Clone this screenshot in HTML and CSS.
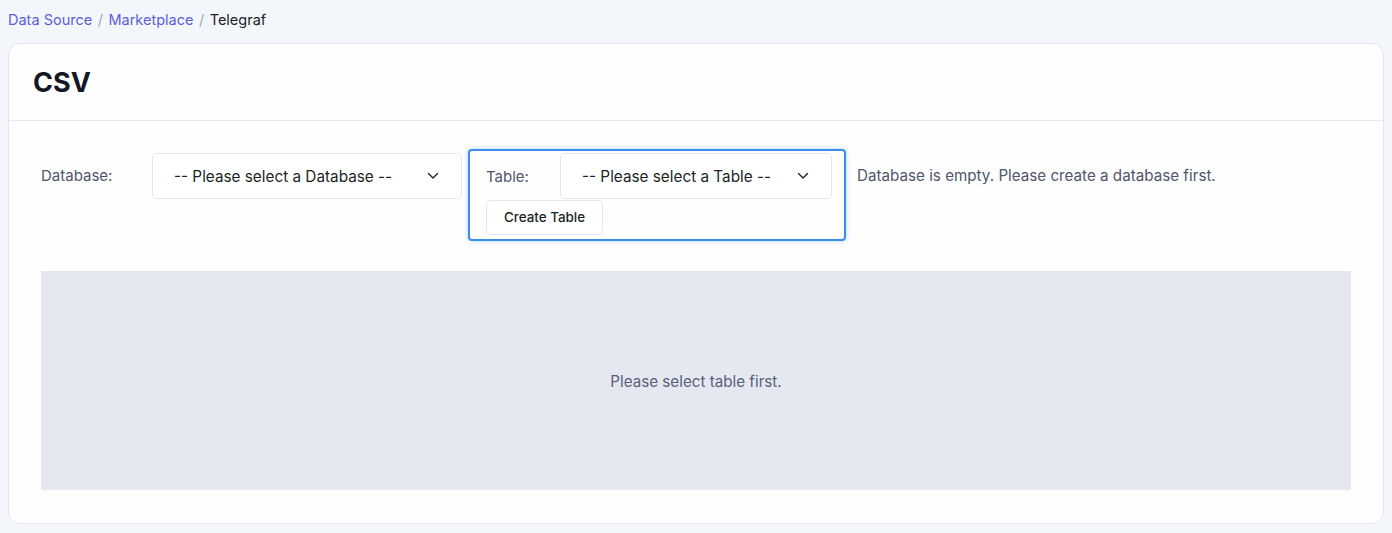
FILE: index.html
```html
<!DOCTYPE html>
<html>
<head>
<meta charset="utf-8">
<link rel="stylesheet" href="styles.css">
</head>
<body>
<nav class="crumbs">
  <a class="crumb-link">Data Source</a><span class="sep">/</span><a class="crumb-link">Marketplace</a><span class="sep">/</span><span class="crumb-current">Telegraf</span>
</nav>
<section class="card">
  <header class="card-head"><h1 class="title">CSV</h1></header>
  <div class="card-body">
    <div class="row">
      <label class="label db-label">Database:</label>
      <div class="select db-select"><span class="select-text">-- Please select a Database --</span><svg class="chev" width="12" height="8" viewBox="0 0 12 8"><path d="M1.5 1.5 L6 6 L10.5 1.5" fill="none" stroke="#222" stroke-width="1.4" stroke-linecap="round" stroke-linejoin="round"/></svg></div>
      <div class="group">
        <div class="group-row">
          <label class="label tb-label">Table:</label>
          <div class="select tb-select"><span class="select-text">-- Please select a Table --</span><svg class="chev" width="12" height="8" viewBox="0 0 12 8"><path d="M1.5 1.5 L6 6 L10.5 1.5" fill="none" stroke="#222" stroke-width="1.4" stroke-linecap="round" stroke-linejoin="round"/></svg></div>
        </div>
        <button class="btn">Create Table</button>
      </div>
      <p class="hint">Database is empty. Please create a database first.</p>
    </div>
    <div class="empty">Please select table first.</div>
  </div>
</section>
</body>
</html>
```
FILE: styles.css
```css
* { box-sizing: border-box; }
html, body { margin: 0; padding: 0; }
body {
  background: #f3f6fb;
  font-family: Inter, "Noto Sans", sans-serif;
  color: #1f2937;
  padding: 0 8px 10px 8px;
}
.crumbs {
  height: 43px;
  display: flex;
  align-items: center;
  padding-bottom: 4px;
  font-size: 14.5px;
}
.crumb-link { color: #5b5fd9; }
.sep { color: #a3a8b3; margin: 0 5.5px; }
.crumb-current { color: #1b1f27; }
.card {
  background: #fefefe;
  border: 1px solid #e4e7ec;
  border-radius: 12px;
  height: 481px;
}
.card-head {
  height: 77px;
  border-bottom: 1px solid #e8eaee;
  display: flex;
  align-items: center;
  padding: 0 24px;
}
.title {
  margin: 0;
  font-size: 27px;
  font-weight: 700;
  color: #141824;
  padding-top: 1px;
}
.card-body { padding: 28px 32px 32px 32px; }
.row {
  display: flex;
  align-items: flex-start;
  height: 122px;
}
.label {
  font-size: 15px;
  color: #4f566b;
}
.db-label {
  width: 111px;
  margin-top: 4px;
  height: 46px;
  line-height: 46px;
}
.select {
  height: 46px;
  background: #fff;
  border: 1px solid #e3e6eb;
  border-radius: 5px;
  display: flex;
  align-items: center;
  justify-content: space-between;
  padding: 0 22px 0 21px;
  font-size: 15.3px;
  color: #1c1f26;
}
.db-select { width: 310px; margin-top: 4px; }
.chev { display: block; }
.group {
  margin-left: 6px;
  border: 2px solid #3a8ee8;
  border-radius: 4px;
  padding: 2px 12px 4px 16px;
  box-shadow: 0 0 5px rgba(58, 142, 232, 0.4);
  display: flex;
  flex-direction: column;
  align-items: flex-start;
  gap: 1px;
}
.group-row { display: flex; align-items: center; }
.tb-label { width: 74px; }
.tb-select { width: 272px; }
.btn {
  font-family: inherit;
  font-size: 13.4px;
  font-weight: 500;
  color: #1b1f27;
  background: #fff;
  border: 1px solid #e3e6eb;
  border-radius: 5px;
  width: 117px;
  height: 35px;
  padding: 0 0 2px 0;
}
.hint {
  margin: 4px 0 0 11px;
  height: 46px;
  line-height: 46px;
  font-size: 15.2px;
  color: #4f566b;
}
.empty {
  height: 219px;
  background: #e5e8f0;
  display: flex;
  align-items: center;
  justify-content: center;
  font-size: 15.2px;
  color: #59607a;
  padding-top: 1px;
}
```
